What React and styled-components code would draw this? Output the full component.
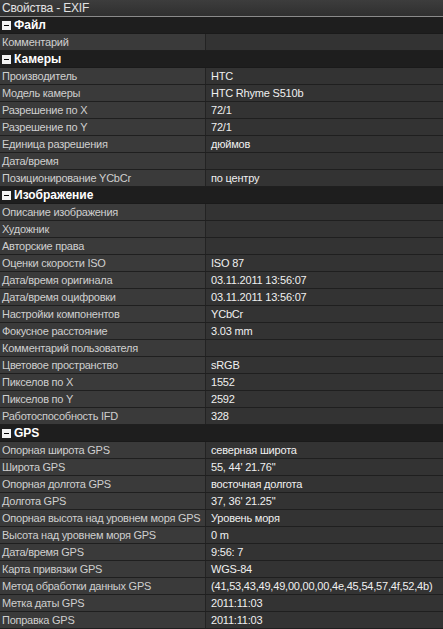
import React from 'react';
import styled, { createGlobalStyle } from 'styled-components';

const sections = [
  { title: 'Файл', rows: [['Комментарий', '']] },
  {
    title: 'Камеры',
    rows: [
      ['Производитель', 'HTC'],
      ['Модель камеры', 'HTC Rhyme S510b'],
      ['Разрешение по X', '72/1'],
      ['Разрешение по Y', '72/1'],
      ['Единица разрешения', 'дюймов'],
      ['Дата/время', ''],
      ['Позиционирование YCbCr', 'по центру'],
    ],
  },
  {
    title: 'Изображение',
    rows: [
      ['Описание изображения', ''],
      ['Художник', ''],
      ['Авторские права', ''],
      ['Оценки скорости ISO', 'ISO 87'],
      ['Дата/время оригинала', '03.11.2011 13:56:07'],
      ['Дата/время оцифровки', '03.11.2011 13:56:07'],
      ['Настройки компонентов', 'YCbCr'],
      ['Фокусное расстояние', '3.03 mm'],
      ['Комментарий пользователя', ''],
      ['Цветовое пространство', 'sRGB'],
      ['Пикселов по X', '1552'],
      ['Пикселов по Y', '2592'],
      ['Работоспособность IFD', '328'],
    ],
  },
  {
    title: 'GPS',
    rows: [
      ['Опорная широта GPS', 'северная широта'],
      ['Широта GPS', '55, 44\' 21.76"'],
      ['Опорная долгота GPS', 'восточная долгота'],
      ['Долгота GPS', '37, 36\' 21.25"'],
      ['Опорная высота над уровнем моря GPS', 'Уровень моря'],
      ['Высота над уровнем моря GPS', '0 m'],
      ['Дата/время GPS', '9:56: 7'],
      ['Карта привязки GPS', 'WGS-84'],
      ['Метод обработки данных GPS', '(41,53,43,49,49,00,00,00,4e,45,54,57,4f,52,4b)'],
      ['Метка даты GPS', '2011:11:03'],
      ['Поправка GPS', '2011:11:03'],
    ],
  },
];

const GlobalStyle = createGlobalStyle`
  body {
    margin: 0;
    background: #333;
    font-family: "Liberation Sans", Arial, sans-serif;
    font-size: 11px;
  }
`;

const Panel = styled.div`
  width: 443px;
  height: 629px;
  overflow: hidden;
  background: #333;
`;

const TitleBar = styled.div`
  height: 16px;
  line-height: 16px;
  padding-left: 2px;
  color: #e2e2e2;
  font-size: 12px;
  letter-spacing: -0.2px;
  background: linear-gradient(#3d3d3d, #2f2f2f);
  border-bottom: 1px solid #8a8a8a;
`;

const Header = styled.div`
  display: flex;
  align-items: center;
  gap: 3px;
  height: 16px;
  padding-left: 2px;
  background: #1e1e1e;
  border-bottom: 1px solid #1a1a1a;
  color: #fff;
  font-size: 12px;
  font-weight: bold;
`;

const Toggle = styled.span`
  position: relative;
  width: 9px;
  height: 9px;
  background: #f2f2f2;
  &::after {
    content: '';
    position: absolute;
    left: 2px;
    right: 2px;
    top: 4px;
    height: 1px;
    background: #000;
  }
`;

const Row = styled.div`
  display: grid;
  grid-template-columns: 206px 1fr;
  height: 16px;
  line-height: 17px;
  border-bottom: 1px solid #1f1f1f;
`;

const Label = styled.div`
  padding-left: 2px;
  background: #3a3a3a;
  border-right: 1px solid #232323;
  color: #cfcfcf;
  letter-spacing: -0.25px;
  white-space: nowrap;
  overflow: hidden;
  text-overflow: ellipsis;
`;

const Value = styled.div`
  padding-left: 5px;
  background: #333;
  color: #f0f0f0;
  letter-spacing: -0.2px;
  white-space: nowrap;
  overflow: hidden;
`;

export default function App() {
  return (
    <Panel>
      <GlobalStyle />
      <TitleBar>Свойства - EXIF</TitleBar>
      {sections.map((s) => (
        <React.Fragment key={s.title}>
          <Header><Toggle />{s.title}</Header>
          {s.rows.map(([k, v]) => (
            <Row key={k}>
              <Label>{k}</Label>
              <Value>{v}</Value>
            </Row>
          ))}
        </React.Fragment>
      ))}
    </Panel>
  );
}
